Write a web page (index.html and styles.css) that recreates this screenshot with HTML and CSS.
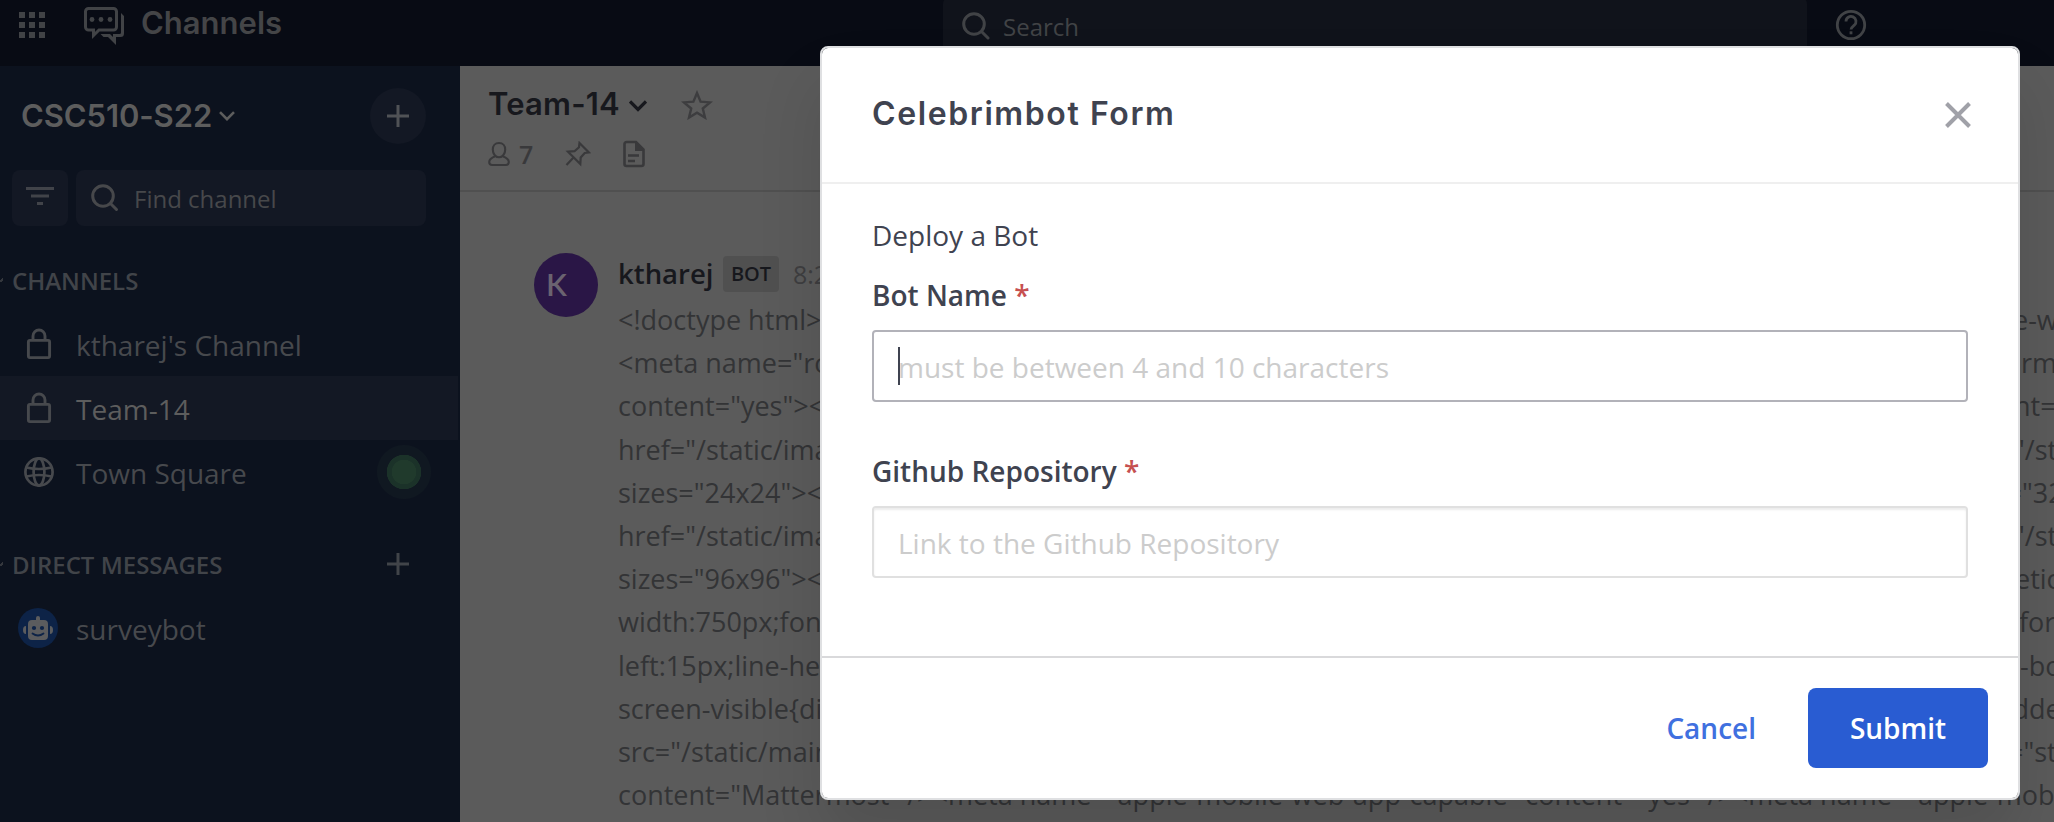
FILE: index.html
```html
<!DOCTYPE html>
<html lang="en">
<head>
<meta charset="utf-8">
<title>Channels</title>
<link rel="stylesheet" href="styles.css">
</head>
<body>
<div class="app">
  <header class="topbar">
    <div class="brand">
      <svg class="grid-icon" width="28" height="28" viewBox="0 0 28 28" fill="currentColor"><path d="M1 1h6v6H1zM11 1h6v6h-6zM21 1h6v6h-6zM1 11h6v6H1zM11 11h6v6h-6zM21 11h6v6h-6zM1 21h6v6H1zM11 21h6v6h-6zM21 21h6v6h-6z"/></svg>
      <svg class="chat-icon" width="40" height="38" viewBox="0 0 40 38"><g fill="none" stroke="currentColor" stroke-width="3"><path d="M4.500 1.500h25a3 3 0 0 1 3 3v15.500a3 3 0 0 1-3 3h-14.500l-5.500 5.500v-5.500h-5a3 3 0 0 1-3-3v-15.500a3 3 0 0 1 3-3z"/></g><g fill="currentColor"><path d="M37 6l3 3v17.500a3.500 3.500 0 0 1-3.500 3.500H32v8l-8-8h-4.500l-3-3H26l3 3v-3h6.500a1.500 1.500 0 0 0 1.500-1.500z"/><circle cx="8" cy="12.500" r="2.400"/><circle cx="17" cy="12.500" r="2.400"/><circle cx="26" cy="12.500" r="2.400"/></g></svg>
      <span class="brand-name">Channels</span>
    </div>
    <div class="global-search">
      <svg width="28" height="28" viewBox="0 0 28 28" fill="none" stroke="currentColor" stroke-width="3" stroke-linecap="round"><circle cx="12" cy="12" r="10.300"/><path d="M19.500 19.500l6.500 6.500"/></svg>
      <span>Search</span>
    </div>
    <svg class="help" width="32" height="32" viewBox="0 0 32 32" fill="none" stroke="currentColor" stroke-width="2.800"><circle cx="16" cy="16" r="13.700"/><path d="M11 12.500a5 5 0 1 1 8.300 3.700c-2 1.600-3.300 2.300-3.300 4.300"/><path d="M16 22.300v3"/></svg>
  </header>

  <div class="body">
    <nav class="sidebar">
      <div class="team">
        <span class="team-name">CSC510-S22</span>
        <svg class="team-chevron" width="16" height="10" viewBox="0 0 16 10" fill="none" stroke="currentColor" stroke-width="2.600"><path d="M1 1.200l7 7 7-7"/></svg>
        <span class="add"><svg width="22" height="22" viewBox="0 0 22 22" stroke="currentColor" stroke-width="3"><path d="M11 0v22M0 11h22"/></svg></span>
      </div>
      <div class="finder">
        <span class="filter"><svg width="28" height="20" viewBox="0 0 28 20" stroke="currentColor" stroke-width="3"><path d="M0 2.500h28M5 10h18M11 17.500h6"/></svg></span>
        <span class="find">
          <svg width="28" height="28" viewBox="0 0 28 28" fill="none" stroke="currentColor" stroke-width="3" stroke-linecap="round"><circle cx="12" cy="12" r="10.300"/><path d="M19.500 19.500l6 6"/></svg>
          <span>Find channel</span>
        </span>
      </div>
      <div class="category"><i class="twist"></i><span>CHANNELS</span></div>
      <div class="channel">
        <svg width="30" height="32" viewBox="0 0 30 32" fill="none" stroke="currentColor" stroke-width="2.900"><rect x="4.400" y="12.400" width="21.200" height="17.200" rx="1.500"/><path d="M9 12.400V8a6 6 0 0 1 12 0v4.400"/></svg>
        <span>ktharej's Channel</span>
      </div>
      <div class="channel active">
        <svg width="30" height="32" viewBox="0 0 30 32" fill="none" stroke="currentColor" stroke-width="2.900"><rect x="4.400" y="12.400" width="21.200" height="17.200" rx="1.500"/><path d="M9 12.400V8a6 6 0 0 1 12 0v4.400"/></svg>
        <span>Team-14</span>
      </div>
      <div class="channel">
        <svg width="30" height="32" viewBox="0 0 30 32" fill="none" stroke="currentColor" stroke-width="2.700"><circle cx="15" cy="16" r="13.600"/><ellipse cx="15" cy="16" rx="5.400" ry="13.600"/><path d="M2.400 11.500q12.600 3 25.200 0M2.400 20.500q12.600-3 25.200 0"/></svg>
        <span>Town Square</span>
        <i class="pulse"></i>
      </div>
      <div class="category direct"><i class="twist"></i><span>DIRECT MESSAGES</span>
        <svg class="dm-add" width="22" height="22" viewBox="0 0 22 22" stroke="currentColor" stroke-width="3"><path d="M11 0v22M0 11h22"/></svg>
      </div>
      <div class="channel dm">
        <svg width="40" height="40" viewBox="0 0 40 40"><circle cx="20" cy="20" r="20" fill="#0d2347"/><g fill="#5b5c5e"><rect x="10" y="12" width="20" height="20" rx="4"/><rect x="18" y="8" width="4" height="7" rx="2"/><path d="M8 18v8a3 4 0 0 1 0-8zM32 18v8a3 4 0 0 0 0-8z"/></g><g fill="#0d2347"><circle cx="16" cy="20" r="2.100"/><circle cx="24" cy="20" r="2.100"/></g><path d="M14.500 25.500q5.500 4 11 0" fill="none" stroke="#0d2347" stroke-width="1.800" stroke-linecap="round"/></svg>
        <span>surveybot</span>
      </div>
    </nav>

    <main class="center">
      <div class="channel-header">
        <div class="title-row">
          <span class="channel-title">Team-14</span>
          <svg class="title-chevron" width="18" height="12" viewBox="0 0 18 12" fill="none" stroke="currentColor" stroke-width="3.200"><path d="M1 1.500l8 8 8-8"/></svg>
          <svg class="star" width="32" height="30" viewBox="0 0 32 30" fill="none" stroke="currentColor" stroke-width="2.400"><path d="M16 3l3.600 8.700 9.400.7-7.200 6.100 2.200 9.100-8-4.900-8 4.900 2.200-9.100L3 12.400l9.400-.7z"/></svg>
        </div>
        <div class="info-row">
          <svg width="22" height="26" viewBox="0 0 22 26" fill="none" stroke="currentColor" stroke-width="2.100"><path d="M11 2c-4 0-6.200 3-6.200 6.500 0 4 2.500 7.800 6.200 7.800s6.200-3.800 6.200-7.800C17.200 5 15 2 11 2z"/><path d="M7.300 15.200C4 16.500 1.200 18 1.200 21c0 2 1 3 3 3h13.600c2 0 3-1 3-3 0-3-2.800-4.500-6.100-5.800"/></svg>
          <span class="count">7</span>
          <svg class="pin" width="26" height="26" viewBox="0 0 26 26" fill="none" stroke="currentColor" stroke-width="2.200"><path d="M14.500 2l9.500 9.500-4.300.5-4 4.500-.4 6.500L3 10.700l6.500-.5 4.500-4zM8.500 16.500L1.500 24"/></svg>
          <svg class="doc" width="22" height="28" viewBox="0 0 22 28"><path d="M13 2H3.500A2 2 0 0 0 1.500 4v20a2 2 0 0 0 2 2h15a2 2 0 0 0 2-2V9.500z" fill="none" stroke="currentColor" stroke-width="2.600"/><path d="M12 2v9h9z" fill="currentColor"/><path d="M5 15.500h11M5 21h7" stroke="currentColor" stroke-width="2.400"/></svg>
        </div>
      </div>
      <article class="post">
        <div class="avatar">K</div>
        <div class="post-main">
          <div class="post-head"><b>ktharej</b><span class="tag">BOT</span><time>8:21 PM</time></div>
          <div class="code">
            <div><span>&lt;!doctype html&gt;&lt;html</span><span>e-w</span></div>
            <div><span>&lt;meta name="robots"</span><span>rm</span></div>
            <div><span>content="yes"&gt;&lt;meta</span><span>nt=</span></div>
            <div><span>href="/static/images</span><span>"/st</span></div>
            <div><span>sizes="24x24"&gt;&lt;link</span><span>="32</span></div>
            <div><span>href="/static/images</span><span>"/st</span></div>
            <div><span>sizes="96x96"&gt;&lt;style</span><span>etic</span></div>
            <div><span>width:750px;font-size</span><span>for</span></div>
            <div><span>left:15px;line-height</span><span>-bo</span></div>
            <div><span>screen-visible{display</span><span>dde</span></div>
            <div><span>src="/static/main.js"</span><span>="st</span></div>
            <div class="long">content="Mattermost" /&gt;&lt;meta name="apple-mobile-web-app-capable" content="yes" /&gt;&lt;meta name="apple-mob</div>
          </div>
        </div>
      </article>
    </main>
  </div>

  <section class="modal">
    <div class="modal-header">
      <h1>Celebrimbot Form</h1>
      <svg width="26" height="26" viewBox="0 0 26 26" stroke="currentColor" stroke-width="4"><path d="M1.500 1.500l23 23M24.500 1.500l-23 23"/></svg>
    </div>
    <div class="modal-body">
      <p>Deploy a Bot</p>
      <label>Bot Name <em>*</em></label>
      <div class="field focused"><i class="caret"></i>must be between 4 and 10 characters</div>
      <label>Github Repository <em>*</em></label>
      <div class="field">Link to the Github Repository</div>
    </div>
    <div class="modal-footer">
      <span class="cancel">Cancel</span>
      <span class="submit">Submit</span>
    </div>
  </section>
</div>
</body>
</html>
```
FILE: styles.css
```css
* { box-sizing: border-box; }
body { margin: 0; font-family: "Open Sans", sans-serif; }
svg { display: block; flex: none; }
span, time, b { white-space: nowrap; }
.app { position: relative; width: 2054px; height: 822px; overflow: hidden; background: #5b5b5b; }

.topbar { height: 66px; display: flex; align-items: flex-start; background: #080b14; color: #414346; }
.brand { width: 943px; display: flex; align-items: flex-start; padding-left: 18px; }
.grid-icon { margin-top: 11px; }
.chat-icon { margin: 7px 17px 0 38px; }
.brand-name { font: 600 31px/40px Inter, sans-serif; margin-top: 3px; color: #444547; }
.global-search { width: 864px; height: 62px; margin-top: -4px; padding: 16px 0 0 19px; border-radius: 8px; background: #10131b; display: flex; align-items: flex-start; gap: 13px; }
.global-search span { font-size: 24px; line-height: 30px; }
.help { margin: 9px 0 0 28px; }

.body { display: flex; height: 756px; }
.sidebar { width: 460px; flex: none; background: #0c121e; color: #47494d; }
.team { height: 100px; padding-left: 21px; display: flex; align-items: center; color: #5d5d5d; }
.team-name { font: 600 31px/40px Inter, sans-serif; letter-spacing: -0.100px; width: 198px; }
.add { margin-left: 135px; width: 56px; height: 56px; border-radius: 50%; background: #131824; display: grid; place-items: center; color: #505256; }
.finder { display: flex; gap: 8px; padding: 4px 0 0 12px; height: 82px; }
.filter { width: 56px; height: 56px; border-radius: 8px; background: #131824; display: grid; place-items: center; padding-bottom: 4px; color: #414349; }
.find { width: 350px; height: 56px; border-radius: 8px; background: #131824; display: flex; align-items: center; padding-left: 15px; gap: 15px; font-size: 24px; color: #47484b; }
.category { height: 64px; display: flex; align-items: center; font-size: 24px; font-weight: 600; color: #414449; }
.twist { width: 3px; height: 4px; margin-right: 9px; background: linear-gradient(135deg, transparent 40%, #34373d 40%, #34373d 75%, transparent 75%); }
.direct { margin-top: 28px; }
.dm-add { margin-left: 165px; }
.channel { height: 64px; width: 458px; padding-left: 24px; display: flex; align-items: center; gap: 22px; font-size: 28px; }
.channel.active { background: #131824; }
.active span { color: #5d5d5d; }
.channel span { margin-top: 1px; }
.channel.dm { padding-left: 18px; gap: 18px; }
.pulse { width: 54px; height: 54px; margin: 0 27px 0 auto; border-radius: 50%; background: radial-gradient(circle, #203a2c 0 12px, #1b3229 12.500px 17px, #101821 17.500px 27px); }

.center { flex: 1; min-width: 0; overflow: hidden; color: #333436; }
.channel-header { height: 126px; border-bottom: 2px solid #505050; padding: 16px 0 0 28px; }
.title-row { height: 44px; display: flex; align-items: center; }
.channel-title { width: 141px; font: 600 31px/44px Inter, sans-serif; letter-spacing: 0.200px; color: #17181d; }
.title-chevron { color: #17181d; margin-top: 4px; }
.star { margin: 2px 0 0 34px; color: #3d3d3f; }
.info-row { height: 56px; display: flex; align-items: center; color: #39393b; }
.count { font-size: 25px; font-weight: 600; margin-left: 9px; width: 46px; }
.doc { margin-left: 32px; }
.post { display: flex; padding: 61px 0 0 74px; }
.avatar { width: 64px; height: 64px; flex: none; border-radius: 50%; background: #2a1646; color: #6a6370; font: 600 31px/62px Lato, sans-serif; padding-left: 12px; }
.post-main { margin-left: 20px; margin-top: -1px; }
.post-head { display: flex; align-items: center; height: 43px; margin-bottom: 3px; font-size: 27px; }
.post-head b { font-weight: 600; font-size: 27.500px; width: 105px; color: #17181d; }
.tag { width: 56px; height: 36px; line-height: 36px; text-align: center; border-radius: 4px; background: #505050; font-size: 20px; font-weight: 600; color: #17181d; }
.post-head time { margin-left: 14px; font-size: 25px; color: #3e3e40; }
.code { font-size: 27px; line-height: 43.200px; width: 1436px; overflow: hidden; }
.code div { display: flex; white-space: nowrap; }
.code span:first-child { width: 1382px; flex: none; }
.code span:last-child { margin-left: 14px; }
.code div:nth-child(1) span:last-child { margin-left: 13px; }
.code div:nth-child(2) span:last-child { margin-left: 21px; }
.code div:nth-child(5) span:last-child { margin-left: 6.500px; }
.code div:nth-child(7) span:last-child { margin-left: 15px; }
.code div:nth-child(8) span:last-child { margin-left: 19px; }
.code div:nth-child(9) span:last-child { margin-left: 20px; }
.code div:nth-child(10) span:last-child { margin-left: 12.500px; }
.code div:nth-child(11) span:last-child { margin-left: 8px; }

.modal { position: absolute; left: 820px; top: 46px; width: 1200px; height: 754px; background: #fff; background-clip: padding-box; border: 2px solid #dfe0e2; border-radius: 8px; box-shadow: 0 40px 64px rgba(0, 0, 0, .12); color: #3f4350; font-size: 28px; }
.modal-header { height: 136px; padding: 0 47px 0 50px; display: flex; align-items: center; justify-content: space-between; border-bottom: 2px solid #efefef; }
.modal-header h1 { margin: 0; font: 600 32px/40px Inter, sans-serif; letter-spacing: 1.600px; position: relative; top: -1px; }
.modal-header svg { color: #a0a1a8; }
.modal-body { height: 472px; padding: 31px 50px 0; }
.modal-body p { margin: 0; line-height: 40px; }
.modal-body label { display: block; font-weight: 600; line-height: 40px; margin-top: 20px; }
.modal-body em { font-style: normal; color: #c65050; }
.field { position: relative; height: 72px; margin-top: 15px; padding-left: 24px; line-height: 70px; border: 2px solid #e0e0e0; border-radius: 4px; color: #ccc; box-shadow: inset 0 2px 2px rgba(0, 0, 0, .075); }
.field.focused { border-color: #b2b2b9; box-shadow: none; margin-bottom: 49px; }
.caret { position: absolute; left: 24px; top: 15px; width: 2px; height: 38px; background: #3f4350; }
.modal-footer { height: 142px; border-top: 2px solid #d9d9db; padding: 0 30px; display: flex; align-items: center; justify-content: flex-end; gap: 52px; font-weight: 600; }
.cancel { color: #4070df; }
.submit { width: 180px; height: 80px; border-radius: 8px; background: #295cd2; color: #fff; line-height: 80px; text-align: center; }
```
